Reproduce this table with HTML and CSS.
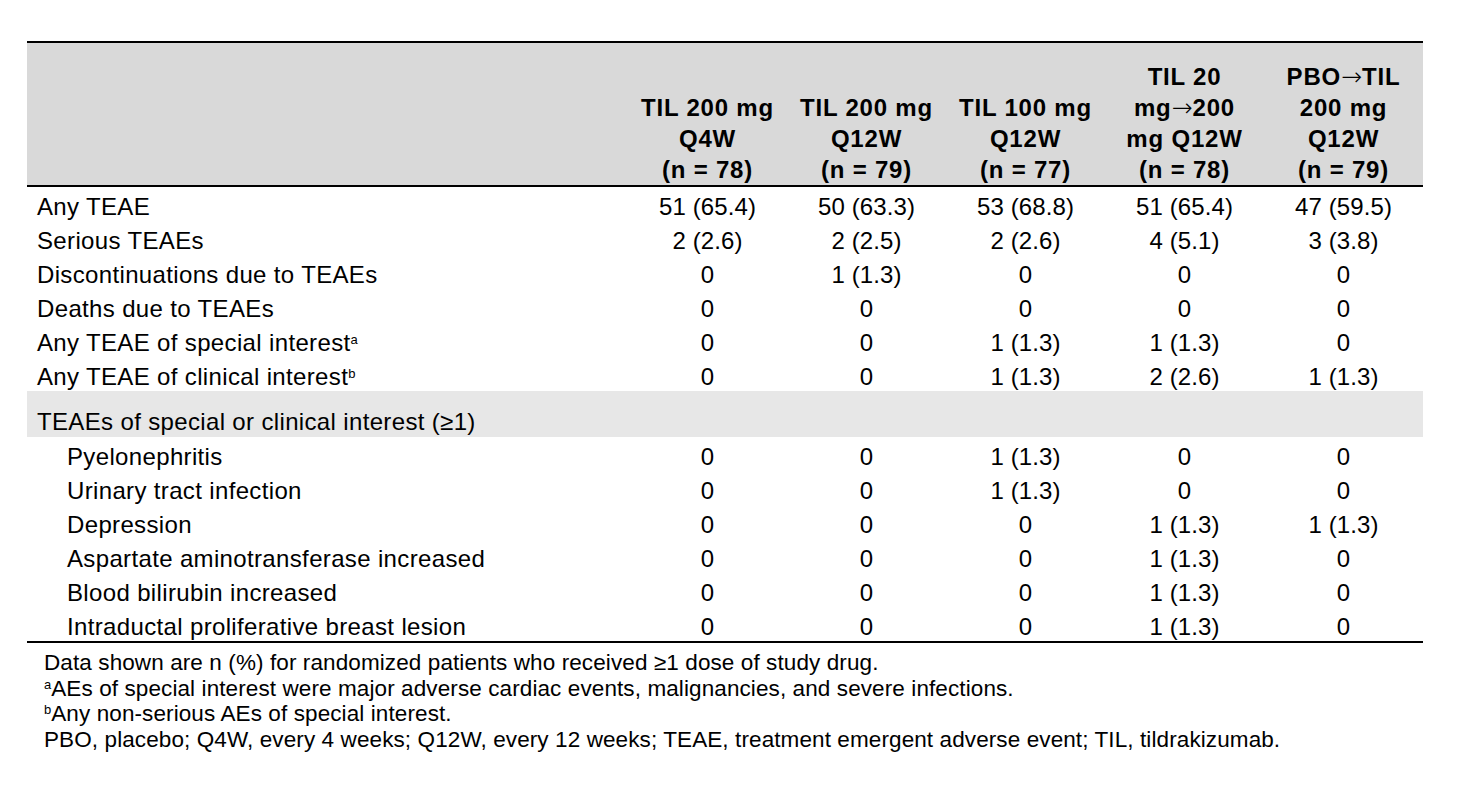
FILE: index.html
```html
<!DOCTYPE html>
<html lang="en">
<head>
<meta charset="utf-8">
<title>TEAE summary</title>
<link rel="stylesheet" href="styles.css">
</head>
<body>
<div class="page">
  <table class="ae">
    <colgroup>
      <col class="c-label">
      <col class="c-arm"><col class="c-arm"><col class="c-arm"><col class="c-arm"><col class="c-arm">
    </colgroup>
    <thead>
      <tr>
        <th class="label"></th>
        <th>TIL 200 mg<br>Q4W<br>(n = 78)</th>
        <th>TIL 200 mg<br>Q12W<br>(n = 79)</th>
        <th>TIL 100 mg<br>Q12W<br>(n = 77)</th>
        <th>TIL 20<br>mg<span class="arrow">→</span>200<br>mg Q12W<br>(n = 78)</th>
        <th>PBO<span class="arrow">→</span>TIL<br>200 mg<br>Q12W<br>(n = 79)</th>
      </tr>
    </thead>
    <tbody>
      <tr><td class="label">Any TEAE</td><td>51 (65.4)</td><td>50 (63.3)</td><td>53 (68.8)</td><td>51 (65.4)</td><td>47 (59.5)</td></tr>
      <tr><td class="label">Serious TEAEs</td><td>2 (2.6)</td><td>2 (2.5)</td><td>2 (2.6)</td><td>4 (5.1)</td><td>3 (3.8)</td></tr>
      <tr><td class="label">Discontinuations due to TEAEs</td><td>0</td><td>1 (1.3)</td><td>0</td><td>0</td><td>0</td></tr>
      <tr><td class="label">Deaths due to TEAEs</td><td>0</td><td>0</td><td>0</td><td>0</td><td>0</td></tr>
      <tr><td class="label">Any TEAE of special interest<sup>a</sup></td><td>0</td><td>0</td><td>1 (1.3)</td><td>1 (1.3)</td><td>0</td></tr>
      <tr><td class="label">Any TEAE of clinical interest<sup>b</sup></td><td>0</td><td>0</td><td>1 (1.3)</td><td>2 (2.6)</td><td>1 (1.3)</td></tr>
    </tbody>
    <tbody class="group">
      <tr class="section"><td class="label" colspan="6">TEAEs of special or clinical interest (≥1)</td></tr>
      <tr><td class="label sub">Pyelonephritis</td><td>0</td><td>0</td><td>1 (1.3)</td><td>0</td><td>0</td></tr>
      <tr><td class="label sub">Urinary tract infection</td><td>0</td><td>0</td><td>1 (1.3)</td><td>0</td><td>0</td></tr>
      <tr><td class="label sub">Depression</td><td>0</td><td>0</td><td>0</td><td>1 (1.3)</td><td>1 (1.3)</td></tr>
      <tr><td class="label sub">Aspartate aminotransferase increased</td><td>0</td><td>0</td><td>0</td><td>1 (1.3)</td><td>0</td></tr>
      <tr><td class="label sub">Blood bilirubin increased</td><td>0</td><td>0</td><td>0</td><td>1 (1.3)</td><td>0</td></tr>
      <tr class="last"><td class="label sub">Intraductal proliferative breast lesion</td><td>0</td><td>0</td><td>0</td><td>1 (1.3)</td><td>0</td></tr>
    </tbody>
  </table>
  <div class="notes">
    <p>Data shown are n (%) for randomized patients who received ≥1 dose of study drug.</p>
    <p><sup>a</sup>AEs of special interest were major adverse cardiac events, malignancies, and severe infections.</p>
    <p><sup>b</sup>Any non-serious AEs of special interest.</p>
    <p>PBO, placebo; Q4W, every 4 weeks; Q12W, every 12 weeks; TEAE, treatment emergent adverse event; TIL, tildrakizumab.</p>
  </div>
</div>
</body>
</html>
```

FILE: styles.css
```css
html, body {
  margin: 0;
  padding: 0;
  background: #ffffff;
}

body {
  font-family: "Liberation Sans", Arial, sans-serif;
  color: #000;
}

.page {
  padding: 41px 0 0 27px;
}

.ae {
  width: 1396px;
  table-layout: fixed;
  border-collapse: separate;
  border-spacing: 0;
  font-size: 24px;
  letter-spacing: 0.1px;
}

.c-label { width: 601px; }
.c-arm { width: 159px; }

.ae th {
  background: #d9d9d9;
  border-top: 2px solid #000;
  border-bottom: 2px solid #000;
  height: 142px;
  padding: 0;
  vertical-align: bottom;
  text-align: center;
  font-weight: bold;
  line-height: 31px;
  letter-spacing: 0.8px;
}

.ae th .arrow {
  font-family: "DejaVu Sans ExtraLight", "DejaVu Sans", sans-serif;
  font-weight: 200;
  font-size: 25px;
  line-height: 0;
  letter-spacing: 0;
}

.ae td {
  height: 34px;
  padding: 0;
  text-align: center;
  vertical-align: bottom;
  line-height: 28px;
  white-space: nowrap;
}

.ae td.label {
  text-align: left;
  padding-left: 10px;
  letter-spacing: 0.35px;
}

.ae td.sub {
  padding-left: 40px;
}

.ae tr.section td {
  height: 46px;
  background: #e7e7e7;
  vertical-align: bottom;
  line-height: 30px;
}

.ae tr.last td {
  border-bottom: 2px solid #000;
}

.ae sup {
  font-size: 13px;
  line-height: 0;
  vertical-align: 7px;
  letter-spacing: 0;
}

.notes {
  margin: 7px 0 0 17px;
  font-size: 22.5px;
  letter-spacing: 0.1px;
  line-height: 25.7px;
}

.notes p {
  margin: 0;
}

.notes sup {
  font-size: 13px;
  line-height: 0;
  vertical-align: 7px;
  letter-spacing: 0;
}
```
